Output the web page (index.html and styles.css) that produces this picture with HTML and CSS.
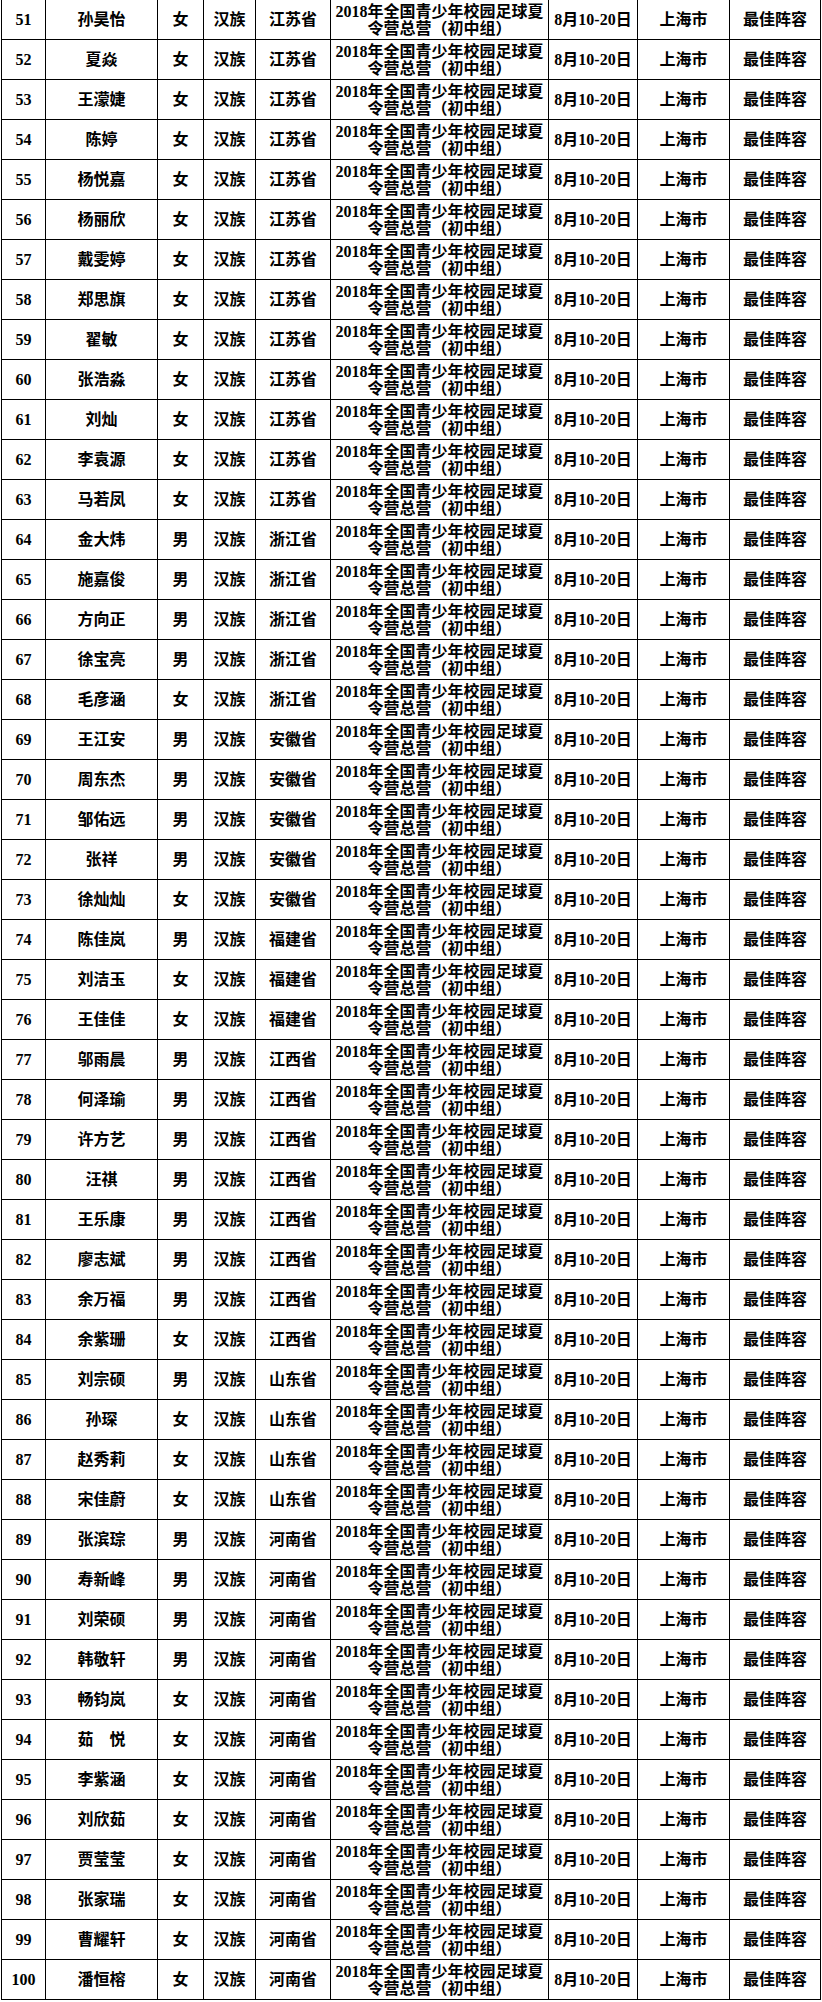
FILE: index.html
```html
<!DOCTYPE html>
<html lang="zh-CN">
<head>
<meta charset="utf-8">
<title>名单</title>
<link rel="stylesheet" href="styles.css">
</head>
<body>
<table class="roster">
<colgroup>
<col class="c-no"><col class="c-name"><col class="c-sex"><col class="c-eth"><col class="c-prov"><col class="c-event"><col class="c-date"><col class="c-city"><col class="c-award">
</colgroup>
<tbody id="rows">
<tr><td class="no">51</td><td>孙昊怡</td><td>女</td><td>汉族</td><td>江苏省</td><td class="event">2018年全国青少年校园足球夏<br>令营总营（初中组）</td><td class="date">8月10-20日</td><td>上海市</td><td>最佳阵容</td></tr>
<tr><td class="no">52</td><td>夏焱</td><td>女</td><td>汉族</td><td>江苏省</td><td class="event">2018年全国青少年校园足球夏<br>令营总营（初中组）</td><td class="date">8月10-20日</td><td>上海市</td><td>最佳阵容</td></tr>
<tr><td class="no">53</td><td>王濛婕</td><td>女</td><td>汉族</td><td>江苏省</td><td class="event">2018年全国青少年校园足球夏<br>令营总营（初中组）</td><td class="date">8月10-20日</td><td>上海市</td><td>最佳阵容</td></tr>
<tr><td class="no">54</td><td>陈婷</td><td>女</td><td>汉族</td><td>江苏省</td><td class="event">2018年全国青少年校园足球夏<br>令营总营（初中组）</td><td class="date">8月10-20日</td><td>上海市</td><td>最佳阵容</td></tr>
<tr><td class="no">55</td><td>杨悦嘉</td><td>女</td><td>汉族</td><td>江苏省</td><td class="event">2018年全国青少年校园足球夏<br>令营总营（初中组）</td><td class="date">8月10-20日</td><td>上海市</td><td>最佳阵容</td></tr>
<tr><td class="no">56</td><td>杨丽欣</td><td>女</td><td>汉族</td><td>江苏省</td><td class="event">2018年全国青少年校园足球夏<br>令营总营（初中组）</td><td class="date">8月10-20日</td><td>上海市</td><td>最佳阵容</td></tr>
<tr><td class="no">57</td><td>戴雯婷</td><td>女</td><td>汉族</td><td>江苏省</td><td class="event">2018年全国青少年校园足球夏<br>令营总营（初中组）</td><td class="date">8月10-20日</td><td>上海市</td><td>最佳阵容</td></tr>
<tr><td class="no">58</td><td>郑思旗</td><td>女</td><td>汉族</td><td>江苏省</td><td class="event">2018年全国青少年校园足球夏<br>令营总营（初中组）</td><td class="date">8月10-20日</td><td>上海市</td><td>最佳阵容</td></tr>
<tr><td class="no">59</td><td>翟敏</td><td>女</td><td>汉族</td><td>江苏省</td><td class="event">2018年全国青少年校园足球夏<br>令营总营（初中组）</td><td class="date">8月10-20日</td><td>上海市</td><td>最佳阵容</td></tr>
<tr><td class="no">60</td><td>张浩淼</td><td>女</td><td>汉族</td><td>江苏省</td><td class="event">2018年全国青少年校园足球夏<br>令营总营（初中组）</td><td class="date">8月10-20日</td><td>上海市</td><td>最佳阵容</td></tr>
<tr><td class="no">61</td><td>刘灿</td><td>女</td><td>汉族</td><td>江苏省</td><td class="event">2018年全国青少年校园足球夏<br>令营总营（初中组）</td><td class="date">8月10-20日</td><td>上海市</td><td>最佳阵容</td></tr>
<tr><td class="no">62</td><td>李袁源</td><td>女</td><td>汉族</td><td>江苏省</td><td class="event">2018年全国青少年校园足球夏<br>令营总营（初中组）</td><td class="date">8月10-20日</td><td>上海市</td><td>最佳阵容</td></tr>
<tr><td class="no">63</td><td>马若凤</td><td>女</td><td>汉族</td><td>江苏省</td><td class="event">2018年全国青少年校园足球夏<br>令营总营（初中组）</td><td class="date">8月10-20日</td><td>上海市</td><td>最佳阵容</td></tr>
<tr><td class="no">64</td><td>金大炜</td><td>男</td><td>汉族</td><td>浙江省</td><td class="event">2018年全国青少年校园足球夏<br>令营总营（初中组）</td><td class="date">8月10-20日</td><td>上海市</td><td>最佳阵容</td></tr>
<tr><td class="no">65</td><td>施嘉俊</td><td>男</td><td>汉族</td><td>浙江省</td><td class="event">2018年全国青少年校园足球夏<br>令营总营（初中组）</td><td class="date">8月10-20日</td><td>上海市</td><td>最佳阵容</td></tr>
<tr><td class="no">66</td><td>方向正</td><td>男</td><td>汉族</td><td>浙江省</td><td class="event">2018年全国青少年校园足球夏<br>令营总营（初中组）</td><td class="date">8月10-20日</td><td>上海市</td><td>最佳阵容</td></tr>
<tr><td class="no">67</td><td>徐宝亮</td><td>男</td><td>汉族</td><td>浙江省</td><td class="event">2018年全国青少年校园足球夏<br>令营总营（初中组）</td><td class="date">8月10-20日</td><td>上海市</td><td>最佳阵容</td></tr>
<tr><td class="no">68</td><td>毛彦涵</td><td>女</td><td>汉族</td><td>浙江省</td><td class="event">2018年全国青少年校园足球夏<br>令营总营（初中组）</td><td class="date">8月10-20日</td><td>上海市</td><td>最佳阵容</td></tr>
<tr><td class="no">69</td><td>王江安</td><td>男</td><td>汉族</td><td>安徽省</td><td class="event">2018年全国青少年校园足球夏<br>令营总营（初中组）</td><td class="date">8月10-20日</td><td>上海市</td><td>最佳阵容</td></tr>
<tr><td class="no">70</td><td>周东杰</td><td>男</td><td>汉族</td><td>安徽省</td><td class="event">2018年全国青少年校园足球夏<br>令营总营（初中组）</td><td class="date">8月10-20日</td><td>上海市</td><td>最佳阵容</td></tr>
<tr><td class="no">71</td><td>邹佑远</td><td>男</td><td>汉族</td><td>安徽省</td><td class="event">2018年全国青少年校园足球夏<br>令营总营（初中组）</td><td class="date">8月10-20日</td><td>上海市</td><td>最佳阵容</td></tr>
<tr><td class="no">72</td><td>张祥</td><td>男</td><td>汉族</td><td>安徽省</td><td class="event">2018年全国青少年校园足球夏<br>令营总营（初中组）</td><td class="date">8月10-20日</td><td>上海市</td><td>最佳阵容</td></tr>
<tr><td class="no">73</td><td>徐灿灿</td><td>女</td><td>汉族</td><td>安徽省</td><td class="event">2018年全国青少年校园足球夏<br>令营总营（初中组）</td><td class="date">8月10-20日</td><td>上海市</td><td>最佳阵容</td></tr>
<tr><td class="no">74</td><td>陈佳岚</td><td>男</td><td>汉族</td><td>福建省</td><td class="event">2018年全国青少年校园足球夏<br>令营总营（初中组）</td><td class="date">8月10-20日</td><td>上海市</td><td>最佳阵容</td></tr>
<tr><td class="no">75</td><td>刘洁玉</td><td>女</td><td>汉族</td><td>福建省</td><td class="event">2018年全国青少年校园足球夏<br>令营总营（初中组）</td><td class="date">8月10-20日</td><td>上海市</td><td>最佳阵容</td></tr>
<tr><td class="no">76</td><td>王佳佳</td><td>女</td><td>汉族</td><td>福建省</td><td class="event">2018年全国青少年校园足球夏<br>令营总营（初中组）</td><td class="date">8月10-20日</td><td>上海市</td><td>最佳阵容</td></tr>
<tr><td class="no">77</td><td>邬雨晨</td><td>男</td><td>汉族</td><td>江西省</td><td class="event">2018年全国青少年校园足球夏<br>令营总营（初中组）</td><td class="date">8月10-20日</td><td>上海市</td><td>最佳阵容</td></tr>
<tr><td class="no">78</td><td>何泽瑜</td><td>男</td><td>汉族</td><td>江西省</td><td class="event">2018年全国青少年校园足球夏<br>令营总营（初中组）</td><td class="date">8月10-20日</td><td>上海市</td><td>最佳阵容</td></tr>
<tr><td class="no">79</td><td>许方艺</td><td>男</td><td>汉族</td><td>江西省</td><td class="event">2018年全国青少年校园足球夏<br>令营总营（初中组）</td><td class="date">8月10-20日</td><td>上海市</td><td>最佳阵容</td></tr>
<tr><td class="no">80</td><td>汪祺</td><td>男</td><td>汉族</td><td>江西省</td><td class="event">2018年全国青少年校园足球夏<br>令营总营（初中组）</td><td class="date">8月10-20日</td><td>上海市</td><td>最佳阵容</td></tr>
<tr><td class="no">81</td><td>王乐康</td><td>男</td><td>汉族</td><td>江西省</td><td class="event">2018年全国青少年校园足球夏<br>令营总营（初中组）</td><td class="date">8月10-20日</td><td>上海市</td><td>最佳阵容</td></tr>
<tr><td class="no">82</td><td>廖志斌</td><td>男</td><td>汉族</td><td>江西省</td><td class="event">2018年全国青少年校园足球夏<br>令营总营（初中组）</td><td class="date">8月10-20日</td><td>上海市</td><td>最佳阵容</td></tr>
<tr><td class="no">83</td><td>余万福</td><td>男</td><td>汉族</td><td>江西省</td><td class="event">2018年全国青少年校园足球夏<br>令营总营（初中组）</td><td class="date">8月10-20日</td><td>上海市</td><td>最佳阵容</td></tr>
<tr><td class="no">84</td><td>余紫珊</td><td>女</td><td>汉族</td><td>江西省</td><td class="event">2018年全国青少年校园足球夏<br>令营总营（初中组）</td><td class="date">8月10-20日</td><td>上海市</td><td>最佳阵容</td></tr>
<tr><td class="no">85</td><td>刘宗硕</td><td>男</td><td>汉族</td><td>山东省</td><td class="event">2018年全国青少年校园足球夏<br>令营总营（初中组）</td><td class="date">8月10-20日</td><td>上海市</td><td>最佳阵容</td></tr>
<tr><td class="no">86</td><td>孙琛</td><td>女</td><td>汉族</td><td>山东省</td><td class="event">2018年全国青少年校园足球夏<br>令营总营（初中组）</td><td class="date">8月10-20日</td><td>上海市</td><td>最佳阵容</td></tr>
<tr><td class="no">87</td><td>赵秀莉</td><td>女</td><td>汉族</td><td>山东省</td><td class="event">2018年全国青少年校园足球夏<br>令营总营（初中组）</td><td class="date">8月10-20日</td><td>上海市</td><td>最佳阵容</td></tr>
<tr><td class="no">88</td><td>宋佳蔚</td><td>女</td><td>汉族</td><td>山东省</td><td class="event">2018年全国青少年校园足球夏<br>令营总营（初中组）</td><td class="date">8月10-20日</td><td>上海市</td><td>最佳阵容</td></tr>
<tr><td class="no">89</td><td>张滨琮</td><td>男</td><td>汉族</td><td>河南省</td><td class="event">2018年全国青少年校园足球夏<br>令营总营（初中组）</td><td class="date">8月10-20日</td><td>上海市</td><td>最佳阵容</td></tr>
<tr><td class="no">90</td><td>寿新峰</td><td>男</td><td>汉族</td><td>河南省</td><td class="event">2018年全国青少年校园足球夏<br>令营总营（初中组）</td><td class="date">8月10-20日</td><td>上海市</td><td>最佳阵容</td></tr>
<tr><td class="no">91</td><td>刘荣硕</td><td>男</td><td>汉族</td><td>河南省</td><td class="event">2018年全国青少年校园足球夏<br>令营总营（初中组）</td><td class="date">8月10-20日</td><td>上海市</td><td>最佳阵容</td></tr>
<tr><td class="no">92</td><td>韩敬轩</td><td>男</td><td>汉族</td><td>河南省</td><td class="event">2018年全国青少年校园足球夏<br>令营总营（初中组）</td><td class="date">8月10-20日</td><td>上海市</td><td>最佳阵容</td></tr>
<tr><td class="no">93</td><td>畅钧岚</td><td>女</td><td>汉族</td><td>河南省</td><td class="event">2018年全国青少年校园足球夏<br>令营总营（初中组）</td><td class="date">8月10-20日</td><td>上海市</td><td>最佳阵容</td></tr>
<tr><td class="no">94</td><td>茹　悦</td><td>女</td><td>汉族</td><td>河南省</td><td class="event">2018年全国青少年校园足球夏<br>令营总营（初中组）</td><td class="date">8月10-20日</td><td>上海市</td><td>最佳阵容</td></tr>
<tr><td class="no">95</td><td>李紫涵</td><td>女</td><td>汉族</td><td>河南省</td><td class="event">2018年全国青少年校园足球夏<br>令营总营（初中组）</td><td class="date">8月10-20日</td><td>上海市</td><td>最佳阵容</td></tr>
<tr><td class="no">96</td><td>刘欣茹</td><td>女</td><td>汉族</td><td>河南省</td><td class="event">2018年全国青少年校园足球夏<br>令营总营（初中组）</td><td class="date">8月10-20日</td><td>上海市</td><td>最佳阵容</td></tr>
<tr><td class="no">97</td><td>贾莹莹</td><td>女</td><td>汉族</td><td>河南省</td><td class="event">2018年全国青少年校园足球夏<br>令营总营（初中组）</td><td class="date">8月10-20日</td><td>上海市</td><td>最佳阵容</td></tr>
<tr><td class="no">98</td><td>张家瑞</td><td>女</td><td>汉族</td><td>河南省</td><td class="event">2018年全国青少年校园足球夏<br>令营总营（初中组）</td><td class="date">8月10-20日</td><td>上海市</td><td>最佳阵容</td></tr>
<tr><td class="no">99</td><td>曹耀轩</td><td>女</td><td>汉族</td><td>河南省</td><td class="event">2018年全国青少年校园足球夏<br>令营总营（初中组）</td><td class="date">8月10-20日</td><td>上海市</td><td>最佳阵容</td></tr>
<tr><td class="no">100</td><td>潘恒榕</td><td>女</td><td>汉族</td><td>河南省</td><td class="event">2018年全国青少年校园足球夏<br>令营总营（初中组）</td><td class="date">8月10-20日</td><td>上海市</td><td>最佳阵容</td></tr>
</tbody>
</table>
</body>
</html>
```

FILE: styles.css
```css
html, body {
  margin: 0;
  padding: 0;
  background: #ffffff;
}

body {
  padding-left: 1px;
  font-family: "Liberation Serif", "Noto Sans CJK SC", serif;
  font-weight: 700;
  font-size: 16px;
  color: #000000;
}

.roster {
  border-collapse: collapse;
  table-layout: fixed;
  width: 820px;
  margin-top: -1px;
}

.roster td {
  border: 1px solid #000000;
  height: 39px;
  padding: 0;
  text-align: center;
  vertical-align: middle;
  white-space: nowrap;
  overflow: hidden;
  line-height: 18px;
}

.c-no { width: 44px; }
.c-name { width: 112px; }
.c-sex { width: 46px; }
.c-eth { width: 52px; }
.c-prov { width: 75px; }
.c-event { width: 218px; }
.c-date { width: 89px; }
.c-city { width: 92px; }
.c-award { width: 91px; }

.roster td.event {
  line-height: 17px;
}

.roster td.date {
  text-align: center;
}
```
